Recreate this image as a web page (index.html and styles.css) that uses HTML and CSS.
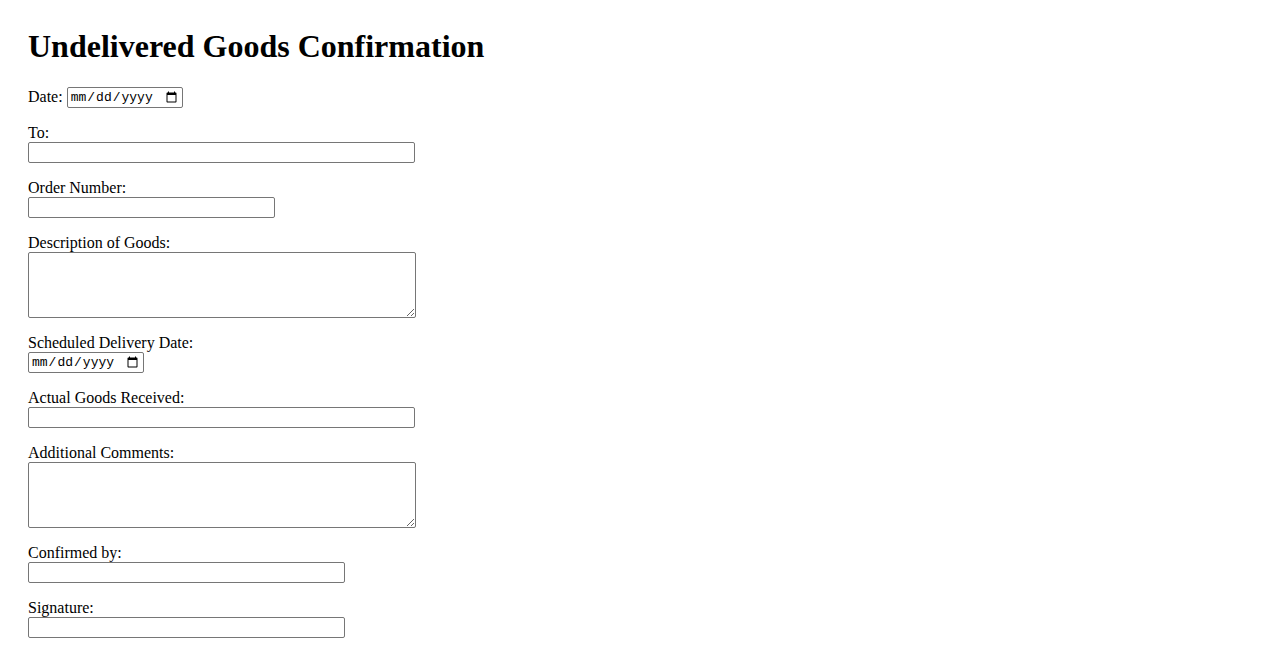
FILE: index.html
```html
<!DOCTYPE html>
<html lang="en">
<head>
<meta charset="utf-8">
<title>Undelivered Goods Confirmation</title>
<link rel="stylesheet" href="styles.css">
</head>
<body>
<div class="page">
  <h1 class="title">Undelivered Goods Confirmation</h1>
  <form class="form">
    <div class="field inline">
      <label class="label-inline" for="date">Date:</label>
      <input class="date" type="date" id="date">
    </div>
    <div class="field">
      <label class="label" for="to">To:</label>
      <input class="text w-long" type="text" id="to">
    </div>
    <div class="field">
      <label class="label" for="order">Order Number:</label>
      <input class="text w-mid" type="text" id="order">
    </div>
    <div class="field">
      <label class="label" for="desc">Description of Goods:</label>
      <textarea class="area" id="desc"></textarea>
    </div>
    <div class="field">
      <label class="label" for="sched">Scheduled Delivery Date:</label>
      <input class="date block" type="date" id="sched">
    </div>
    <div class="field">
      <label class="label" for="actual">Actual Goods Received:</label>
      <input class="text w-long" type="text" id="actual">
    </div>
    <div class="field">
      <label class="label" for="comments">Additional Comments:</label>
      <textarea class="area" id="comments"></textarea>
    </div>
    <div class="field">
      <label class="label" for="confirmed">Confirmed by:</label>
      <input class="text w-short" type="text" id="confirmed">
    </div>
    <div class="field">
      <label class="label" for="signature">Signature:</label>
      <input class="text w-short" type="text" id="signature">
    </div>
  </form>
</div>
</body>
</html>
```

FILE: styles.css
```css
html, body {
  margin: 0;
  padding: 0;
  background: #ffffff;
}

body {
  font-family: "Liberation Serif", "Times New Roman", serif;
  font-size: 16px;
  color: #000000;
}

.page {
  padding: 28px 28px;
}

.title {
  margin: 0 0 21px 0;
  font-size: 32px;
  font-weight: bold;
  line-height: 37px;
}

.form {
  margin: 0;
}

.field {
  margin: 0 0 16px 0;
}

.field.inline {
  height: 22px;
  display: flex;
  align-items: center;
}

.label {
  display: block;
  line-height: 18px;
  height: 18px;
}

.label-inline {
  line-height: 18px;
  margin-right: 4px;
}

.text,
.area,
.date {
  box-sizing: border-box;
  border: 1px solid #767676;
  border-radius: 2px;
  background: #ffffff;
  margin: 0;
  display: block;
}

.text {
  height: 21px;
  padding: 1px 2px;
  font-family: "Liberation Sans", Arial, sans-serif;
  font-size: 13.33px;
}

.w-long { width: 387px; }
.w-mid { width: 247px; }
.w-short { width: 317px; }

.area {
  width: 388px;
  height: 66px;
  padding: 2px;
  font-family: "Liberation Mono", monospace;
  font-size: 13.33px;
  resize: both;
}

.date {
  width: 116px;
  height: 21px;
  padding: 1px 2px;
  font-family: "Liberation Mono", monospace;
  font-size: 13px;
  color: #000000;
}
```
